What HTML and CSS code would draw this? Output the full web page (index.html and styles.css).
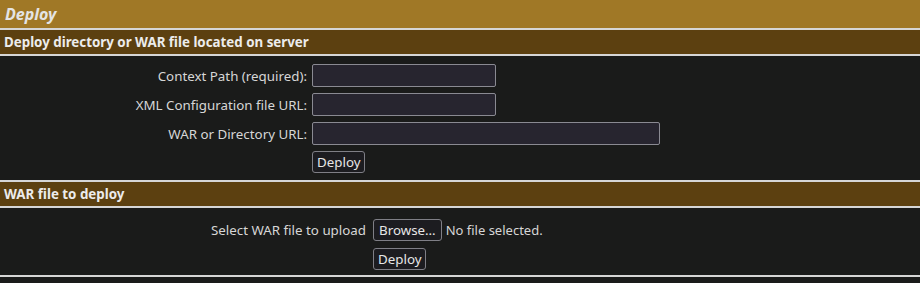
FILE: index.html
```html
<!DOCTYPE html>
<html>
<head>
<meta charset="utf-8">
<link rel="stylesheet" href="styles.css">
</head>
<body>
<div class="panel">
  <div class="title">Deploy</div>
  <div class="header">Deploy directory or WAR file located on server</div>
  <div class="body">
    <form class="grid grid-server">
      <label class="lbl">Context Path (required):</label>
      <span><input class="txt short" type="text"></span>
      <label class="lbl">XML Configuration file URL:</label>
      <span><input class="txt short" type="text"></span>
      <label class="lbl">WAR or Directory URL:</label>
      <span><input class="txt long" type="text"></span>
      <span></span>
      <span><button class="btn" type="button">Deploy</button></span>
    </form>
  </div>
  <div class="header">WAR file to deploy</div>
  <div class="body body-upload">
    <form class="grid grid-upload">
      <label class="lbl">Select WAR file to upload</label>
      <span class="filepick"><button class="btn" type="button">Browse…</button><span class="nofile">No file selected.</span></span>
      <span></span>
      <span><button class="btn" type="button">Deploy</button></span>
    </form>
  </div>
</div>
</body>
</html>
```

FILE: styles.css
```css
html, body {
  margin: 0;
  padding: 0;
  background: #1a1b1a;
}
body {
  font-family: "Noto Sans", "DejaVu Sans", sans-serif;
  font-size: 13.333px;
  color: #d9d9d9;
  width: 920px;
}
.panel {
  border-bottom: 2px solid #d6d6d6;
}
.title {
  background: #a07826;
  color: #e4e4e4;
  font-weight: bold;
  font-style: italic;
  font-size: 16px;
  line-height: 29px;
  padding-left: 5px;
  border-bottom: 2px solid #d6d6d6;
  box-sizing: border-box;
  height: 30px;
}
.header {
  background: #5c4010;
  color: #ececec;
  font-weight: bold;
  font-size: 13.333px;
  height: 26px;
  line-height: 24px;
  padding-left: 4px;
  border-bottom: 2px solid #d6d6d6;
  box-sizing: border-box;
}
.body {
  background: #1a1b1a;
  padding: 8px 0 7px 0;
  border-bottom: 2px solid #d6d6d6;
}
.body-upload {
  border-bottom: none;
  padding: 11px 0 5px 0;
}
.grid {
  display: grid;
  margin: 0;
  align-items: center;
}
.grid-server {
  grid-template-columns: 307px 1fr;
  column-gap: 5px;
  row-gap: 6px;
}
.grid-upload {
  grid-template-columns: 366px 1fr;
  column-gap: 7px;
  row-gap: 7px;
}
.lbl {
  text-align: right;
  color: #d6d6d6;
}
.txt {
  display: block;
  box-sizing: border-box;
  height: 23px;
  margin: 0;
  background: #27252f;
  border: 1px solid #8a8a92;
  border-radius: 2px;
  color: #ddd;
  font: inherit;
  padding: 0 4px;
}
.short { width: 184px; }
.long { width: 348px; }
.btn {
  box-sizing: border-box;
  height: 22px;
  margin: 0;
  padding: 0 4px;
  background: #1c1c20;
  color: #e6e6e6;
  border: 1px solid #7f7f86;
  border-radius: 3px;
  font-family: inherit;
  font-size: 13.333px;
  line-height: 20px;
  vertical-align: middle;
}
.filepick {
  display: flex;
  align-items: center;
  gap: 4px;
}
.filepick .btn {
  padding: 0 5px;
}
.nofile {
  color: #d6d6d6;
  font-size: 13px;
}
```
